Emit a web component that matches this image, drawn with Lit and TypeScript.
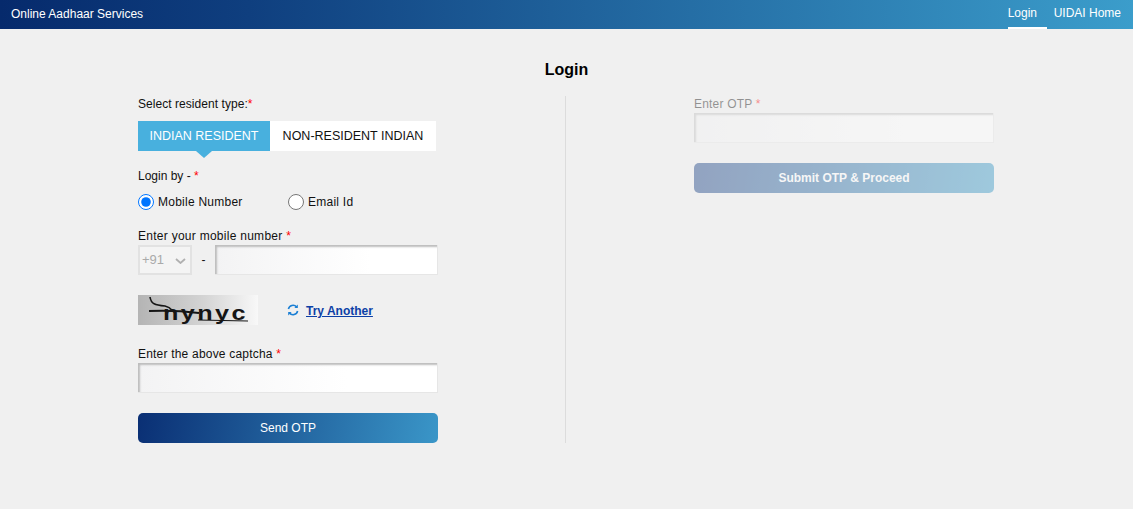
import { LitElement, html, css } from "lit";
import { customElement } from "lit/decorators.js";

@customElement("app-root")
export class AppRoot extends LitElement {
  static styles = css`
    :host {
      display: block;
      min-height: 509px;
      background: #f0f0f0;
      font-family: "Liberation Sans", Arial, sans-serif;
      font-size: 12px;
      color: #111;
    }
    * {
      box-sizing: border-box;
    }
    .header {
      height: 29px;
      display: flex;
      align-items: stretch;
      justify-content: space-between;
      padding: 0 12px 0 11px;
      color: #fff;
      background: linear-gradient(90deg, #062a6c 0%, #0f3f7f 22%, #3b9dcb 100%);
    }
    .brand {
      line-height: 28px;
    }
    .nav {
      display: flex;
      gap: 7px;
    }
    .nav a {
      color: #fff;
      text-decoration: none;
      line-height: 26px;
      border-bottom: 2px solid transparent;
    }
    .nav a.active {
      border-bottom-color: #fff;
      width: 39px;
    }
    h1 {
      margin: 0;
      padding-top: 31px;
      height: 67px;
      text-align: center;
      font-size: 16px;
      line-height: 19px;
      font-weight: bold;
      color: #000;
    }
    .panels {
      display: grid;
      grid-template-columns: 427px 1px 429px;
      width: 857px;
      margin-left: 138px;
    }
    .divider {
      background: #dcdcdc;
      height: 347px;
    }
    .left {
      padding-top: 1px;
    }
    .right {
      padding-top: 1px;
      padding-left: 128px;
      opacity: 0.42;
    }
    .column {
      width: 300px;
    }
    label {
      display: block;
      line-height: 14px;
      letter-spacing: 0.2px;
    }
    .first {
      letter-spacing: 0.05px;
    }
    .req {
      color: #f00;
    }
    .tabs {
      display: flex;
      margin-top: 10px;
      height: 30px;
    }
    .tab {
      position: relative;
      width: 132px;
      text-align: center;
      line-height: 30px;
      background: #48b0de;
      color: #fff;
      font-size: 12.5px;
    }
    .tab::after {
      content: "";
      position: absolute;
      left: 58px;
      top: 30px;
      border-left: 8px solid transparent;
      border-right: 8px solid transparent;
      border-top: 7px solid #48b0de;
    }
    .tab.off {
      width: 166px;
      background: #fff;
      color: #111;
    }
    .tab.off::after {
      display: none;
    }
    .login-by {
      margin-top: 18px;
      letter-spacing: 0;
    }
    .radios {
      display: flex;
      margin-top: 10px;
      height: 18px;
      align-items: center;
      letter-spacing: 0.25px;
    }
    .radio {
      display: flex;
      align-items: center;
      gap: 4px;
      width: 150px;
    }
    .radio input {
      width: 16px;
      height: 16px;
      margin: 0;
    }
    .mobile-label {
      margin-top: 18px;
      letter-spacing: 0.27px;
    }
    .mobile-row {
      display: flex;
      align-items: center;
      margin-top: 2px;
    }
    .select {
      position: relative;
      width: 54px;
      height: 30px;
      border: 2px solid #e2e2e2;
      background: #f4f4f4;
      color: #aaa;
      font-size: 13px;
      line-height: 26px;
      padding-left: 2px;
    }
    .select svg {
      position: absolute;
      right: 4px;
      top: 11px;
    }
    .dash {
      width: 23px;
      text-align: center;
    }
    .field {
      display: block;
      height: 30px;
      width: 300px;
      padding: 0 4px;
      border-style: solid;
      border-width: 0 1px 1px 0;
      border-color: #e6e6e6;
      box-shadow: inset 2px 2px 2px #bdbdbd;
      background: linear-gradient(90deg, #f3f3f4, #fff 70%);
      outline: none;
    }
    .mobile-row .field {
      width: 223px;
    }
    .captcha-row {
      display: flex;
      align-items: center;
      margin-top: 20px;
      height: 30px;
    }
    .captcha {
      display: block;
      width: 120px;
      height: 30px;
    }
    .captcha text {
      font-family: "Liberation Sans", sans-serif;
      font-weight: bold;
      font-size: 21px;
      letter-spacing: 2px;
      fill: #151515;
    }
    .refresh {
      margin-left: 29px;
      width: 12px;
      height: 12px;
    }
    .try {
      margin-left: 7px;
      margin-top: 2px;
      font-weight: bold;
      color: #0d3fa6;
    }
    .captcha-label {
      margin-top: 22px;
      letter-spacing: 0.2px;
    }
    .captcha-input {
      margin-top: 2px;
    }
    .btn {
      display: block;
      width: 300px;
      height: 30px;
      border: 0;
      border-radius: 5px;
      margin-top: 20px;
      color: #fff;
      font: inherit;
      background: linear-gradient(100deg, #0a2f74 0%, #3a96c8 100%);
    }
    .right .field {
      margin-top: 2px;
    }
    .right .btn {
      font-weight: bold;
      background: linear-gradient(100deg, #123a80 0%, #2f95c4 100%);
    }
  `;

  render() {
    return html`
      <header class="header">
        <div class="brand">Online Aadhaar Services</div>
        <nav class="nav">
          <a class="active" href="#">Login</a>
          <a href="#">UIDAI Home</a>
        </nav>
      </header>
      <h1>Login</h1>
      <div class="panels">
        <section class="left column">
          <label class="first">Select resident type:<span class="req">*</span></label>
          <div class="tabs">
            <div class="tab">INDIAN RESIDENT</div>
            <div class="tab off">NON-RESIDENT INDIAN</div>
          </div>
          <label class="login-by">Login by - <span class="req">*</span></label>
          <div class="radios">
            <div class="radio"><input type="radio" name="by" checked />Mobile Number</div>
            <div class="radio"><input type="radio" name="by" />Email Id</div>
          </div>
          <label class="mobile-label">Enter your mobile number <span class="req">*</span></label>
          <div class="mobile-row">
            <div class="select">
              +91
              <svg width="11" height="6" viewBox="0 0 11 6" fill="none" stroke="#b0b0b0" stroke-width="1.8">
                <path d="M1 1l4.5 4L10 1" />
              </svg>
            </div>
            <div class="dash">-</div>
            <input class="field" />
          </div>
          <div class="captcha-row">
            <svg class="captcha" viewBox="0 0 120 30">
              <defs>
                <linearGradient id="capt" x1="0" x2="1" y1="0" y2="0">
                  <stop offset="0" stop-color="#b4b4b4" />
                  <stop offset="0.55" stop-color="#d4d4d4" />
                  <stop offset="1" stop-color="#f8f8f8" />
                </linearGradient>
              </defs>
              <rect width="120" height="30" fill="url(#capt)" />
              <text transform="translate(25 25) scale(1.2 1)">nynyc</text>
              <path d="M12 2c1 7 5 8 15 9 5 1 7 4 9 6" fill="none" stroke="#151515" stroke-width="1.6" />
              <path d="M11 16c20 -1 34 0 50 2" fill="none" stroke="#151515" stroke-width="2" />
              <path d="M60 25l50 1" fill="none" stroke="#151515" stroke-width="1.2" />
            </svg>
            <svg class="refresh" viewBox="0 0 12 12" fill="none" stroke="#1b7fd4" stroke-width="1.6">
              <path d="M1.4 5a4.7 4.7 0 0 1 8.2-2" />
              <path d="M10.6 7a4.7 4.7 0 0 1-8.2 2" />
              <path d="M10.8 0.6v3.4h-3.4z" fill="#1b7fd4" stroke="none" />
              <path d="M1.2 11.4v-3.4h3.4z" fill="#1b7fd4" stroke="none" />
            </svg>
            <a class="try" href="#">Try Another</a>
          </div>
          <label class="captcha-label">Enter the above captcha <span class="req">*</span></label>
          <input class="field captcha-input" />
          <button class="btn">Send OTP</button>
        </section>
        <div class="divider"></div>
        <section class="right">
          <label>Enter OTP <span class="req">*</span></label>
          <input class="field" disabled />
          <button class="btn" disabled>Submit OTP &amp; Proceed</button>
        </section>
      </div>
    `;
  }
}
